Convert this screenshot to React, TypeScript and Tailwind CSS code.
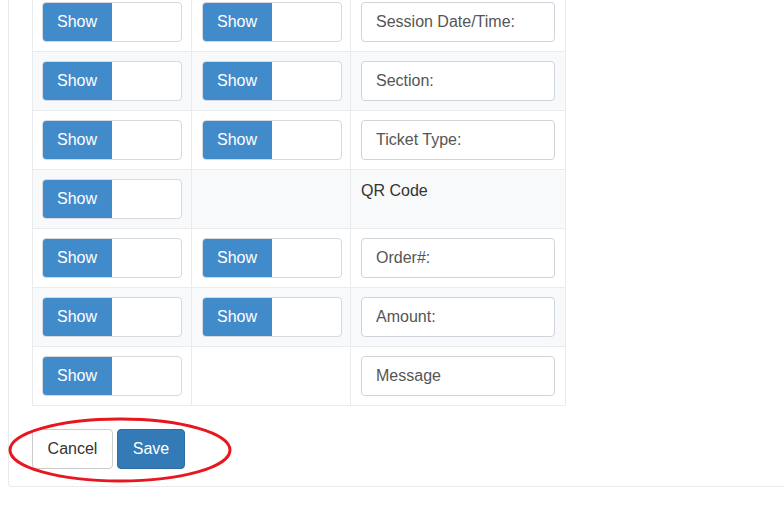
import React from 'react'

type Row = {
  first: boolean
  second: boolean
  field: string
  input: boolean
}

const rows: Row[] = [
  { first: true, second: true, field: 'Session Date/Time:', input: true },
  { first: true, second: true, field: 'Section:', input: true },
  { first: true, second: true, field: 'Ticket Type:', input: true },
  { first: true, second: false, field: 'QR Code', input: false },
  { first: true, second: true, field: 'Order#:', input: true },
  { first: true, second: true, field: 'Amount:', input: true },
  { first: true, second: false, field: 'Message', input: true },
]

function ShowToggle() {
  return (
    <div className="flex h-[40px] w-[140px] overflow-hidden rounded-[4px] border border-[#d6d9dd] bg-white">
      <div className="flex w-[69px] items-center bg-[#428bca] pl-[14px] text-[16px] text-white">Show</div>
    </div>
  )
}

export default function App() {
  return (
    <div className="relative h-[520px] w-[784px] overflow-hidden bg-white font-['Liberation_Sans',Arial,sans-serif]">
      {/* panel, scrolled so its top is out of view */}
      <div className="-mt-[20px] ml-[8px] w-[800px] rounded-b-[4px] border border-t-0 border-[#e8eaed] pl-[23px] pt-[12px] pb-[17px]">
        <div className="w-fit border-b border-l border-r border-[#e9ecef]">
          {rows.map((r, i) => (
            <div
              key={r.field}
              className={`grid h-[59px] grid-cols-[158px_159px_215px] border-t border-[#e9ecef] ${i % 2 === 1 ? 'bg-[#f8f9fb]' : 'bg-white'}`}
            >
              <div className="pl-[9px] pt-[9px]">{r.first && <ShowToggle />}</div>
              <div className="border-l border-[#e9ecef] pl-[10px] pt-[9px]">{r.second && <ShowToggle />}</div>
              <div className="border-l border-[#e9ecef] pl-[10px] pt-[9px]">
                {r.input ? (
                  <div className="flex h-[40px] w-[194px] items-center rounded-[4px] border border-[#cfd4da] bg-white pl-[14px] text-[16px] text-[#555]">
                    {r.field}
                  </div>
                ) : (
                  <div className="pt-[1px] text-[16px] leading-[22px] text-[#333]">{r.field}</div>
                )}
              </div>
            </div>
          ))}
        </div>

        {/* actions */}
        <div className="mt-[23px] flex gap-[4px]">
          <button className="h-[40px] w-[81px] rounded-[4px] border border-[#ccc] bg-white text-[16px] text-[#333]">Cancel</button>
          <button className="h-[40px] w-[68px] rounded-[4px] border border-[#2e6da4] bg-[#337ab7] text-[16px] text-white">Save</button>
        </div>
      </div>

      {/* red annotation circle */}
      <svg className="pointer-events-none absolute left-0 top-0" width="784" height="520">
        <ellipse cx="120" cy="450" rx="110" ry="31" fill="none" stroke="#e8161e" strokeWidth="3" />
      </svg>
    </div>
  )
}
